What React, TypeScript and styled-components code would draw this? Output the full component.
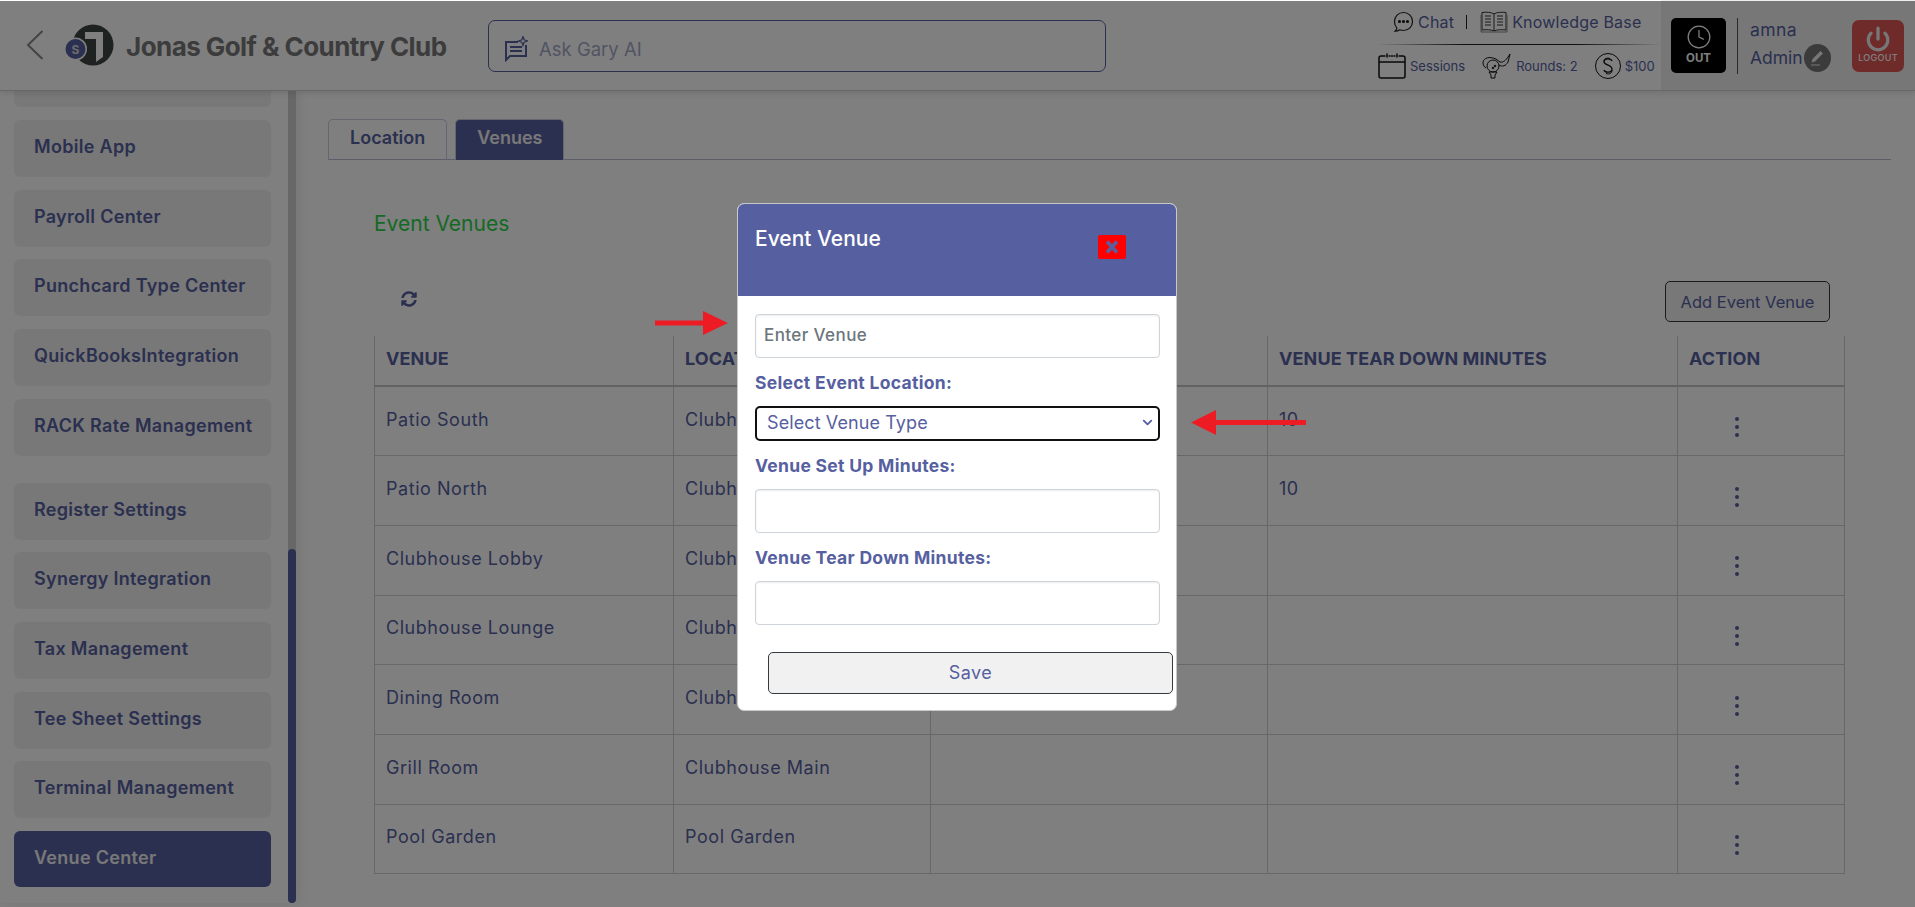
import { FC } from 'react';
import styled, { createGlobalStyle } from 'styled-components';
import { FaSyncAlt } from 'react-icons/fa';
import { FiChevronDown } from 'react-icons/fi';
import { LuClock, LuPower } from 'react-icons/lu';

const NAVY = '#5660a0';
const FONT = '"Inter", "Liberation Sans", sans-serif';

const GlobalStyle = createGlobalStyle`
  html, body { margin: 0; padding: 0; background: #fff; }
  * { box-sizing: border-box; }
  body { font-family: ${FONT}; color: ${NAVY}; }
`;

const Page = styled.div`
  position: relative;
  width: 1915px;
  height: 907px;
  overflow: hidden;
  background: #fff;
`;

const Header = styled.header`
  display: flex;
  align-items: stretch;
  height: 91px;
  border-bottom: 1px solid #d0d0d0;
  box-shadow: 0 2px 6px rgba(0, 0, 0, 0.12);
  position: relative;
  z-index: 2;
  background: #fff;
`;

const Brand = styled.div`
  display: flex;
  align-items: center;
  width: 488px;
  padding-left: 26px;
  padding-bottom: 1px;
`;

const BackIcon = styled.svg`
  width: 18px;
  height: 30px;
  margin-right: 21px;
`;

const LogoIcon = styled.svg`
  width: 49px;
  height: 42px;
  margin-right: 12px;
`;

const BrandName = styled.div`
  margin-top: 3px;
  font-size: 26px;
  font-weight: 700;
  letter-spacing: -0.56px;
  color: #787878;
  white-space: nowrap;
`;

const AskBox = styled.div`
  display: flex;
  align-items: center;
  gap: 11px;
  width: 618px;
  height: 52px;
  margin-top: 20px;
  padding: 6px 0 0 15px;
  border: 1px solid ${NAVY};
  border-radius: 7px;
  font-size: 18.5px;
  color: #a3a8c8;
`;

const QuickLinks = styled.div`
  display: flex;
  flex-direction: column;
  width: 283px;
  margin-left: 272px;
`;

const QuickTop = styled.div`
  display: flex;
  align-items: center;
  height: 45px;
  padding-left: 15px;
  font-size: 16px;
  letter-spacing: 0.2px;
  border-bottom: 1px solid;
  border-image: linear-gradient(90deg, #fff, #222 30%, #222 70%, #fff) 1;
`;

const QuickBottom = styled.div`
  display: flex;
  align-items: center;
  padding-top: 8px;
  font-size: 13px;
`;

const Pipe = styled.span`
  width: 1px;
  height: 14px;
  margin: 0 13px 0 12px;
  background: #222;
`;

const LinkIcon = styled.svg`
  flex: none;
  margin-right: 4px;
`;

const StatGap = styled.span`
  width: 17px;
`;

const UserPanel = styled.div`
  display: flex;
  align-items: flex-start;
  flex: 1;
  padding: 18px 0 0 10px;
  background: #eee;
`;

const ClockOut = styled.div`
  display: flex;
  flex-direction: column;
  align-items: center;
  width: 55px;
  height: 55px;
  padding-top: 6px;
  border-radius: 5px;
  background: #000;
  color: #fff;
  font-size: 11.5px;
  font-weight: 700;
  line-height: 16px;
`;

const UserBox = styled.div`
  width: 115px;
  height: 56px;
  margin-left: 11px;
  padding-left: 12px;
  border-left: 1px solid #555;
  font-size: 17.5px;
`;

const UserName = styled.div`
  line-height: 24px;
  letter-spacing: 0.4px;
`;

const UserRole = styled.div`
  display: flex;
  align-items: center;
  margin-top: 2px;
  line-height: 28px;
`;

const PenBadge = styled.span`
  display: flex;
  align-items: center;
  justify-content: center;
  width: 27px;
  height: 28px;
  margin-left: 1px;
  border-radius: 50%;
  background: #777;
`;

const LogoutButton = styled.div`
  display: flex;
  flex-direction: column;
  align-items: center;
  width: 52px;
  height: 52px;
  margin-top: 2px;
  padding-top: 6px;
  border-radius: 7px;
  background: #de5555;
  color: #fff;
  font-size: 9px;
  font-weight: 500;
  letter-spacing: 0.3px;
`;

const Body = styled.div`
  display: flex;
  height: 812px;
`;

const Sidebar = styled.aside`
  display: flex;
  width: 296px;
  height: 812px;
  box-shadow: 3px 0 12px rgba(0, 0, 0, 0.08);
`;

const SideList = styled.nav`
  display: flex;
  flex-direction: column;
  justify-content: flex-end;
  width: 288px;
  height: 812px;
  padding: 0 17px 16px 14px;
  overflow: hidden;
`;

const SideItem = styled.div<{ $active?: boolean; $spaced?: boolean }>`
  flex: none;
  height: 56px;
  margin-top: ${(p) => (p.$spaced ? 28 : 13.7)}px;
  padding: 17px 20px 0;
  border-radius: 6px;
  font-size: 18px;
  font-weight: 600;
  letter-spacing: 0.3px;
  line-height: 20px;
  white-space: nowrap;
  background: ${(p) => (p.$active ? NAVY : '#f0f0f0')};
  color: ${(p) => (p.$active ? '#f0f0f0' : NAVY)};
  box-shadow: ${(p) => (p.$active ? 'none' : '0 1px 1px rgba(0,0,0,0.06)')};
`;

const ScrollTrack = styled.div`
  display: flex;
  align-items: flex-end;
  width: 8px;
  height: 812px;
  background: #cfcfcf;
  border-radius: 0 0 4px 4px;
`;

const ScrollThumb = styled.div`
  width: 8px;
  height: 354px;
  border-radius: 4px;
  background: ${NAVY};
`;

const Main = styled.main`
  flex: 1;
  padding: 28px 25px 0 32px;
`;

const Tabs = styled.div`
  display: flex;
  gap: 8px;
  height: 41px;
  border-bottom: 1px solid #b9bdd6;
`;

const Tab = styled.div<{ $active?: boolean }>`
  height: 41px;
  padding: 8px 21px 0;
  border: 1px solid #c9cce0;
  border-bottom: none;
  border-radius: 5px 5px 0 0;
  font-size: 18px;
  font-weight: 600;
  line-height: 20px;
  background: ${(p) => (p.$active ? NAVY : 'transparent')};
  color: ${(p) => (p.$active ? '#f0f0f0' : NAVY)};
`;

const Section = styled.section`
  padding: 0 46px;
`;

const SectionTitle = styled.h2`
  margin: 52px 0 0;
  font-size: 21px;
  font-weight: 400;
  line-height: 24px;
  color: #2cd348;
`;

const Toolbar = styled.div`
  display: flex;
  align-items: flex-start;
  justify-content: space-between;
  height: 74px;
  margin-top: 26px;
  padding-left: 27px;
`;

const RefreshSlot = styled.div`
  padding-top: 29px;
  color: ${NAVY};
  font-size: 16px;
`;

const AddButton = styled.div`
  display: flex;
  align-items: center;
  justify-content: center;
  width: 165px;
  height: 41px;
  margin-top: 19px;
  margin-right: 15px;
  border: 1px solid #343a40;
  border-radius: 5px;
  background: #f1f1f1;
  font-size: 16.5px;
`;

const Table = styled.table`
  width: 1470px;
  table-layout: fixed;
  border-collapse: collapse;
  font-size: 18px;
  letter-spacing: 0.55px;
`;

const HeadCell = styled.th`
  height: 50px;
  padding: 0 11px 5px;
  text-align: left;
  font-size: 18px;
  font-weight: 700;
  letter-spacing: 0.1px;
  white-space: nowrap;
  overflow: hidden;
  border-left: 1px solid #d0d0d0;
  border-right: 1px solid #d0d0d0;
  border-bottom: 2px solid #c4c4c4;
`;

const Cell = styled.td`
  height: 69.7px;
  padding: 0 11px 4px;
  white-space: nowrap;
  border: 1px solid #d0d0d0;
  border-top: none;
`;

const ActionCell = styled(Cell)`
  padding: 12px 0 0 56px;
`;

const Dots = styled.svg`
  display: block;
`;

const Overlay = styled.div`
  position: absolute;
  inset: 1px 0 0 0;
  z-index: 10;
  background: rgba(0, 0, 0, 0.5);
`;

const Modal = styled.div`
  position: absolute;
  z-index: 11;
  left: 737px;
  top: 203px;
  width: 440px;
  height: 508px;
  border: 1px solid #c8c8c8;
  border-radius: 7px;
  background: #fff;
  overflow: hidden;
`;

const ModalHead = styled.div`
  display: flex;
  align-items: flex-start;
  justify-content: space-between;
  height: 92px;
  padding: 21px 50px 0 17px;
  background: ${NAVY};
  color: #fff;
  font-size: 21px;
  font-weight: 500;
  line-height: 28px;
`;

const CloseButton = styled.div`
  display: flex;
  align-items: center;
  justify-content: center;
  width: 28px;
  height: 24px;
  margin-top: 10px;
  border-radius: 2px;
  background: #ff0000;
  color: ${NAVY};
`;

const ModalBody = styled.div`
  padding: 18px 16px 0 17px;
`;

const TextBox = styled.div`
  height: 44px;
  width: 405px;
  padding: 0 8px;
  border: 1px solid #ced4da;
  border-radius: 4px;
  box-shadow: inset 0 1px 2px rgba(0, 0, 0, 0.08);
  font-size: 17px;
  font-weight: 500;
  letter-spacing: 0.4px;
  line-height: 40px;
  color: #6c757d;
`;

const FieldLabel = styled.div`
  height: 48px;
  padding-top: 15px;
  font-size: 17.5px;
  font-weight: 700;
  letter-spacing: 0.3px;
  line-height: 20px;
  color: ${NAVY};
`;

const SelectBox = styled.div`
  display: flex;
  align-items: center;
  justify-content: space-between;
  width: 405px;
  height: 35px;
  padding: 0 3px 3px 10px;
  border: 2.5px solid #111;
  border-radius: 5px;
  font-size: 18px;
  letter-spacing: 0.1px;
  color: ${NAVY};
`;

const SelectLabel = styled(FieldLabel)`
  padding-top: 15px;
`;

const SaveButton = styled.div`
  display: flex;
  align-items: center;
  justify-content: center;
  width: 405px;
  height: 42px;
  margin: 27px 0 0 13px;
  padding-bottom: 2px;
  border: 1px solid #343a40;
  border-radius: 5px;
  background: #f1f1f1;
  font-size: 18px;
  letter-spacing: 0.4px;
  color: ${NAVY};
`;

const Arrow = styled.svg<{ $left: number; $top: number }>`
  position: absolute;
  z-index: 12;
  left: ${(p) => p.$left}px;
  top: ${(p) => p.$top}px;
`;

const sideItems = [
  '',
  'Mobile App',
  'Payroll Center',
  'Punchcard Type Center',
  'QuickBooksIntegration',
  'RACK Rate Management',
  'Register Settings',
  'Synergy Integration',
  'Tax Management',
  'Tee Sheet Settings',
  'Terminal Management',
  'Venue Center',
];

const venues = [
  { name: 'Patio South', location: 'Clubhouse Main', setup: '10', tear: '10' },
  { name: 'Patio North', location: 'Clubhouse Main', setup: '10', tear: '10' },
  { name: 'Clubhouse Lobby', location: 'Clubhouse Main', setup: '', tear: '' },
  { name: 'Clubhouse Lounge', location: 'Clubhouse Main', setup: '', tear: '' },
  { name: 'Dining Room', location: 'Clubhouse Main', setup: '', tear: '' },
  { name: 'Grill Room', location: 'Clubhouse Main', setup: '', tear: '' },
  { name: 'Pool Garden', location: 'Pool Garden', setup: '', tear: '' },
];

const App: FC = () => (
  <Page>
    <GlobalStyle />
    <Header>
      <Brand>
        <BackIcon viewBox="0 0 18 30" fill="none" stroke="#888" strokeWidth="2">
          <path d="M16.5 1 2 15l14.5 14" />
        </BackIcon>
        <LogoIcon viewBox="0 0 49 42">
          <circle cx="28" cy="21" r="20.5" fill="#3c4644" />
          <path d="M20 8h18v25l-7 5V15H20z" fill="#fff" />
          <circle cx="10.5" cy="25" r="11.5" fill="#fff" />
          <circle cx="10.5" cy="25" r="10" fill={NAVY} />
          <text x="10.5" y="29.500" textAnchor="middle" fontSize="12" fontWeight="700" fill="#d8d8d8">
            S
          </text>
        </LogoIcon>
        <BrandName>Jonas Golf &amp; Country Club</BrandName>
      </Brand>
      <AskBox>
        <svg width="24" height="26" viewBox="0 0 24 26" fill="none" stroke={NAVY} strokeWidth="2">
          <path d="M14 6H2v18l4-4h16V9" />
          <path d="M6 11h12M6 15h12" />
          <path d="M19 0.5l1.2 3.3 3.3 1.2-3.3 1.2L19 9.5l-1.2-3.3-3.3-1.2 3.3-1.2z" strokeWidth="1.2" />
        </svg>
        Ask Gary AI
      </AskBox>
      <QuickLinks>
        <QuickTop>
          <LinkIcon width="21" height="22" viewBox="0 0 21 22" fill="none" stroke="#222" strokeWidth="1.2">
            <path d="M10.5 1.5c5.2 0 9 3.8 9 9s-3.8 9-9 9c-1.3 0-2.6-.3-3.7-.7-1.3.9-3 1.5-4.8 1.4 1-.9 1.7-2 1.9-3.1C2.3 15.500 1.500 13.200 1.500 10.500c0-5.200 3.800-9 9-9z" />
            <circle cx="6.500" cy="10.500" r="1" fill="#222" />
            <circle cx="10.500" cy="10.500" r="1" fill="#222" />
            <circle cx="14.500" cy="10.500" r="1" fill="#222" />
          </LinkIcon>
          Chat
          <Pipe />
          <LinkIcon width="28" height="22" viewBox="0 0 28 22" fill="none" stroke="#333" strokeWidth="1">
            <path d="M14 3C11 1 6 1 2 1.500V19c4-.5 9-.5 12 1 3-1.500 8-1.500 12-1V1.500C22 1 17 1 14 3zM14 3v17" />
            <path d="M5 5h6M5 8h6M5 11h6M5 14h6M17 5h6M17 8h6M17 11h6M17 14h6" />
            <path d="M1 4v17h26V4" stroke="#888" />
          </LinkIcon>
          Knowledge Base
        </QuickTop>
        <QuickBottom>
          <LinkIcon width="28" height="26" viewBox="0 0 28 26" fill="none" stroke="#111" strokeWidth="1.500">
            <rect x="1" y="3" width="26" height="22" rx="2" />
            <path d="M1 9h26" />
            <path d="M9 0v5M19 0v5M12 3h4" stroke="#fff" strokeWidth="3" />
            <path d="M9 0.500v4M19 0.500v4M12.500 3h3" />
          </LinkIcon>
          Sessions
          <StatGap />
          <LinkIcon width="30" height="26" viewBox="0 0 30 26" fill="none" stroke="#111" strokeWidth="1">
            <path d="M1 9c1-4 6-6 13-3l4 3c3 1 6-2 8-5l2-3-2 8c-2 4-6 5-9 3" />
            <path d="M1 9c0 3 1 5 3 6" />
            <circle cx="11" cy="13" r="6" />
            <path d="M7 19h8l-2 3v3h-4v-3z" />
            <circle cx="13" cy="13" r=".8" fill="#111" />
            <circle cx="11" cy="15" r=".8" fill="#111" />
          </LinkIcon>
          Rounds: 2
          <StatGap />
          <LinkIcon width="26" height="26" viewBox="0 0 26 26" fill="none" stroke="#111" strokeWidth="1">
            <circle cx="13" cy="13" r="12.500" />
            <path d="M17 8c-1-3-8-3-8 1 0 3 8 3 8 7 0 4-7 4-8 1" strokeWidth="1.300" />
            <path d="M15 5.500c-3-1-6 0-6 3M11 20.500c3 1 6 0 6-3" />
          </LinkIcon>
          $100
        </QuickBottom>
      </QuickLinks>
      <UserPanel>
        <ClockOut>
          <LuClock size={26} strokeWidth={1.2} />
          <span>OUT</span>
        </ClockOut>
        <UserBox>
          <UserName>amna</UserName>
          <UserRole>
            Admin
            <PenBadge>
              <svg width="14" height="16" viewBox="0 0 14 16" fill="#eee">
                <path d="M10.500 1 13 3.500 5 11.500l-3.500 1 1-3.500z" />
                <path d="M1 14.500h9v1H1z" />
              </svg>
            </PenBadge>
          </UserRole>
        </UserBox>
        <LogoutButton>
          <LuPower size={26} strokeWidth={3} color="#eee" />
          <span>LOGOUT</span>
        </LogoutButton>
      </UserPanel>
    </Header>
    <Body>
      <Sidebar>
        <SideList>
          {sideItems.map((item) => (
            <SideItem
              key={item || 'clipped'}
              $active={item === 'Venue Center'}
              $spaced={item === 'Register Settings'}
            >
              {item}
            </SideItem>
          ))}
        </SideList>
        <ScrollTrack>
          <ScrollThumb />
        </ScrollTrack>
      </Sidebar>
      <Main>
        <Tabs>
          <Tab>Location</Tab>
          <Tab $active>Venues</Tab>
        </Tabs>
        <Section>
          <SectionTitle>Event Venues</SectionTitle>
          <Toolbar>
            <RefreshSlot>
              <FaSyncAlt />
            </RefreshSlot>
            <AddButton>Add Event Venue</AddButton>
          </Toolbar>
          <Table>
            <colgroup>
              <col width="299" />
              <col width="257" />
              <col width="337" />
              <col width="410" />
              <col width="167" />
            </colgroup>
            <thead>
              <tr>
                <HeadCell>VENUE</HeadCell>
                <HeadCell>LOCATION</HeadCell>
                <HeadCell>VENUE SET UP MINUTES</HeadCell>
                <HeadCell>VENUE TEAR DOWN MINUTES</HeadCell>
                <HeadCell>ACTION</HeadCell>
              </tr>
            </thead>
            <tbody>
              {venues.map((v) => (
                <tr key={v.name}>
                  <Cell>{v.name}</Cell>
                  <Cell>{v.location}</Cell>
                  <Cell>{v.setup}</Cell>
                  <Cell>{v.tear}</Cell>
                  <ActionCell>
                    <Dots width="6" height="22" viewBox="0 0 6 22" fill={NAVY}>
                      <circle cx="3" cy="3" r="2" />
                      <circle cx="3" cy="11" r="2" />
                      <circle cx="3" cy="19" r="2" />
                    </Dots>
                  </ActionCell>
                </tr>
              ))}
            </tbody>
          </Table>
        </Section>
      </Main>
    </Body>
    <Overlay />
    <Modal>
      <ModalHead>
        Event Venue
        <CloseButton>
          <svg width="14" height="14" viewBox="0 0 14 14" stroke={NAVY} strokeWidth="3.500">
            <path d="M2 1.500l10 11M12 1.500l-10 11" />
          </svg>
        </CloseButton>
      </ModalHead>
      <ModalBody>
        <TextBox>Enter Venue</TextBox>
        <FieldLabel>Select Event Location:</FieldLabel>
        <SelectBox>
          Select Venue Type
          <FiChevronDown size={15} strokeWidth={3} />
        </SelectBox>
        <SelectLabel>Venue Set Up Minutes:</SelectLabel>
        <TextBox />
        <FieldLabel>Venue Tear Down Minutes:</FieldLabel>
        <TextBox />
        <SaveButton>Save</SaveButton>
      </ModalBody>
    </Modal>
    <Arrow $left={655} $top={311} width="73" height="24" viewBox="0 0 73 24" fill="#ed1c24">
      <path d="M0 9.500h48V0l25 12-25 12v-9.500H0z" />
    </Arrow>
    <Arrow $left={1191} $top={410} width="115" height="25" viewBox="0 0 115 25" fill="#ed1c24">
      <path d="M115 10H25V0L0 12.500 25 25V15h90z" />
    </Arrow>
  </Page>
);

export default App;
